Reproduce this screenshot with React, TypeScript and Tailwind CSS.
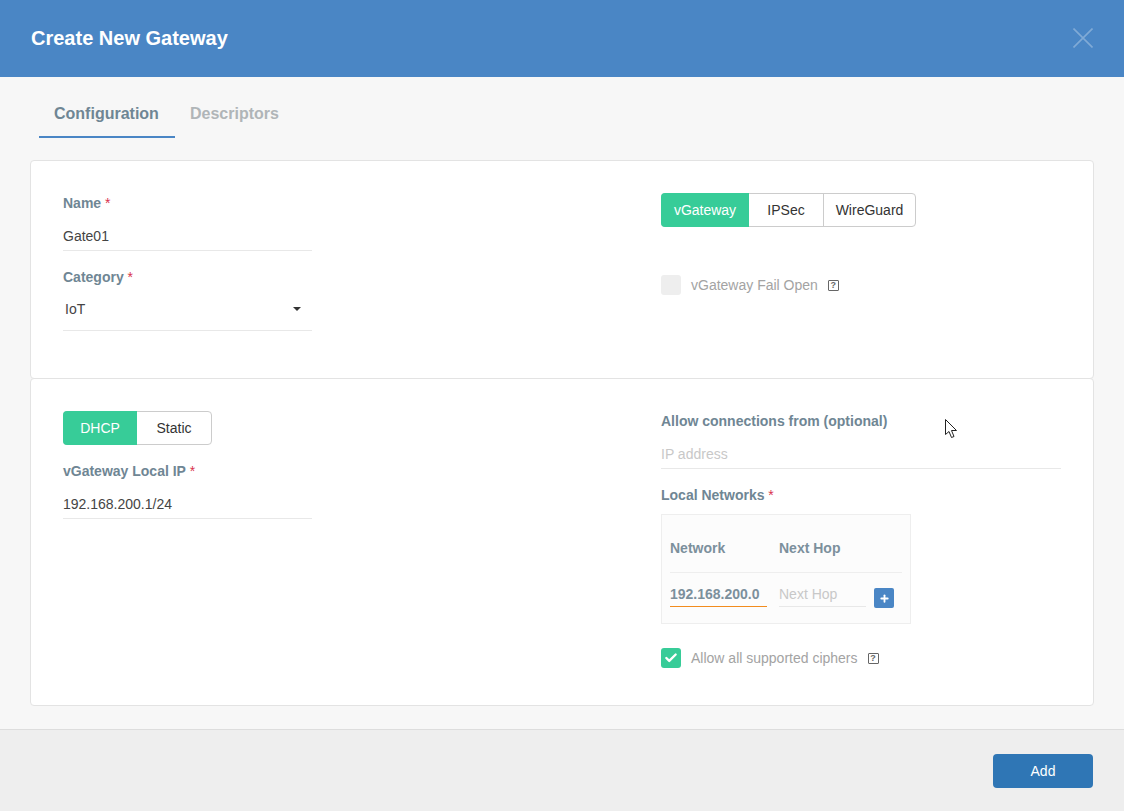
import { Check, Plus } from 'lucide-react';

const font = { fontFamily: '"Liberation Sans", Arial, sans-serif' };

function Label({ text, required = false }: { text: string; required?: boolean }) {
  return (
    <div className="h-5 text-sm leading-5 font-bold text-[#6f8694]">
      {text}
      {required && <span className="font-normal text-[#d9324e]"> *</span>}
    </div>
  );
}

function Segmented({ items, widths }: { items: string[]; widths: string[] }) {
  return (
    <div className="flex h-[34px] w-fit rounded-[4px] border border-[#ccc] bg-white">
      {items.map((item, i) => (
        <div
          key={item}
          className={`${widths[i]} flex items-center justify-center text-sm ${
            i === 0 ? '-m-px mr-0 rounded-l-[4px] bg-[#37cc98] text-white h-[34px]' : 'border-l border-[#ccc] text-[#333]'
          } ${i === 1 ? 'border-l-0' : ''}`}
        >
          {item}
        </div>
      ))}
    </div>
  );
}

function HelpIcon() {
  return (
    <span className="ml-[10px] flex h-[11px] w-[11px] items-center justify-center rounded-[1px] border border-[#666] text-[9px] leading-none font-bold text-[#666]">
      ?
    </span>
  );
}

function Cursor() {
  return (
    <svg className="absolute top-[419px] left-[945px]" width="14" height="21" viewBox="0 0 14 21">
      <path d="M0.5 0.5V15.5L4 12.5L6.5 18.5L9 17.5L6.5 11.5H11.5Z" fill="#fff" stroke="#222" strokeWidth="1" />
    </svg>
  );
}

export default function App() {
  return (
    <div className="relative flex h-[811px] w-[1124px] flex-col overflow-hidden bg-[#f7f7f7]" style={font}>
      <header className="flex h-[77px] flex-shrink-0 items-center justify-between pr-[31px] pb-[2px] pl-[31px] bg-[#4a86c5]">
        <h1 className="text-xl font-bold text-white">Create New Gateway</h1>
        <svg width="20" height="20" viewBox="0 0 20 20" className="text-white/30">
          <path d="M0.5 0.5L19.5 19.5M19.5 0.5L0.5 19.5" stroke="currentColor" strokeWidth="1.6" fill="none" />
        </svg>
      </header>

      <main className="flex-1 px-[30px]">
        <div className="ml-[9px] flex h-[61px]">
          <div className="flex w-[136px] items-center border-b-2 border-[#4a86c5] pt-[14px] pl-[15px] text-base font-bold text-[#6f8694]">
            Configuration
          </div>
          <div className="flex items-center px-[15px] pt-[14px] pb-[2px] text-base font-bold text-[#b0b5b8]">Descriptors</div>
        </div>

        <section className="mt-[22px] flex h-[219px] rounded-[4px] border border-[#e3e3e3] bg-white pt-[32px] pl-[32px]">
          <div className="w-[598px]">
            <Label text="Name" required />
            <div className="mt-[9px] h-[29px] w-[249px] border-b border-[#e8e8e8] text-sm leading-[29px] text-[#444]">Gate01</div>
            <div className="mt-[16px]">
              <Label text="Category" required />
            </div>
            <div className="flex h-[44px] w-[249px] items-center justify-between border-b border-[#e8e8e8] pr-[11px] pl-[2px] text-sm text-[#444]">
              IoT
              <span className="h-0 w-0 border-x-[4px] border-t-[4px] border-x-transparent border-t-[#333]" />
            </div>
          </div>
          <div>
            <Segmented items={['vGateway', 'IPSec', 'WireGuard']} widths={['w-[88px]', 'w-[74px]', 'w-[92px]']} />
            <div className="mt-[48px] flex items-center text-sm text-[#a3a3a3]">
              <span className="mr-[10px] h-5 w-5 rounded-[3px] bg-[#eee]" />
              vGateway Fail Open
              <HelpIcon />
            </div>
          </div>
        </section>

        <section className="-mt-px flex h-[328px] rounded-[4px] border border-[#e3e3e3] bg-white pt-[32px] pl-[32px]">
          <div className="w-[598px]">
            <Segmented items={['DHCP', 'Static']} widths={['w-[74px]', 'w-[74px]']} />
            <div className="mt-[16px]">
              <Label text="vGateway Local IP" required />
            </div>
            <div className="mt-[9px] h-[29px] w-[249px] border-b border-[#e8e8e8] text-sm leading-[29px] text-[#444]">192.168.200.1/24</div>
          </div>
          <div>
            <Label text="Allow connections from (optional)" />
            <div className="mt-[9px] h-[29px] w-[400px] border-b border-[#e8e8e8] text-sm leading-[29px] text-[#c8c8c8]">IP address</div>
            <div className="mt-[16px]">
              <Label text="Local Networks" required />
            </div>
            <div className="mt-[9px] h-[110px] w-[250px] border border-[#eee] bg-[#fcfcfc] px-[8px]">
              <div className="flex h-[58px] items-end border-b border-[#eee] pb-[14px] text-sm font-bold text-[#7c909c]">
                <span className="w-[109px]">Network</span>
                <span>Next Hop</span>
              </div>
              <div className="flex">
                <div className="mt-[8px] h-[26px] w-[97px] border-b border-[#f28c1e] text-sm leading-[26px] font-bold whitespace-nowrap text-[#7c909c]">
                  192.168.200.0
                </div>
                <div className="mt-[8px] ml-[12px] h-[26px] w-[87px] border-b border-[#e8e8e8] text-sm leading-[26px] text-[#c8c8c8]">
                  Next Hop
                </div>
                <div className="mt-[15px] ml-[8px] flex h-5 w-5 items-center justify-center rounded-[2px] bg-[#4a86c5]">
                  <Plus className="h-[11px] w-[11px] text-white" strokeWidth={4} />
                </div>
              </div>
            </div>
            <div className="mt-[24px] flex items-center text-sm text-[#a3a3a3]">
              <span className="mr-[10px] flex h-5 w-5 items-center justify-center rounded-[3px] bg-[#37cc98]">
                <Check className="h-[14px] w-[14px] text-white" strokeWidth={4} />
              </span>
              Allow all supported ciphers
              <HelpIcon />
            </div>
          </div>
        </section>
      </main>

      <footer className="flex h-[82px] flex-shrink-0 justify-end border-t border-[#ddd] bg-[#eee] pt-[24px] pr-[31px]">
        <button className="h-[34px] w-[100px] rounded-[4px] bg-[#2f76b5] text-sm text-white">Add</button>
      </footer>

      <Cursor />
    </div>
  );
}
